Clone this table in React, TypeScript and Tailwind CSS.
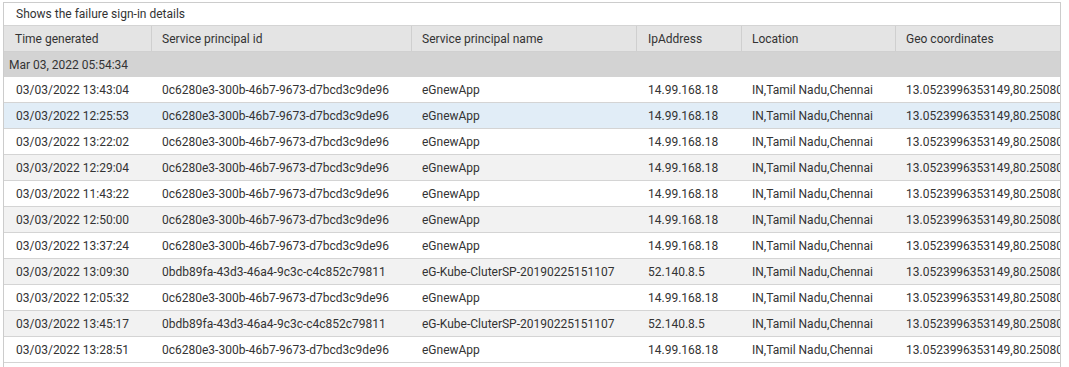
const rows = [
  { time: "03/03/2022 13:43:04", id: "0c6280e3-300b-46b7-9673-d7bcd3c9de96", name: "eGnewApp", ip: "14.99.168.18" },
  { time: "03/03/2022 12:25:53", id: "0c6280e3-300b-46b7-9673-d7bcd3c9de96", name: "eGnewApp", ip: "14.99.168.18" },
  { time: "03/03/2022 13:22:02", id: "0c6280e3-300b-46b7-9673-d7bcd3c9de96", name: "eGnewApp", ip: "14.99.168.18" },
  { time: "03/03/2022 12:29:04", id: "0c6280e3-300b-46b7-9673-d7bcd3c9de96", name: "eGnewApp", ip: "14.99.168.18" },
  { time: "03/03/2022 11:43:22", id: "0c6280e3-300b-46b7-9673-d7bcd3c9de96", name: "eGnewApp", ip: "14.99.168.18" },
  { time: "03/03/2022 12:50:00", id: "0c6280e3-300b-46b7-9673-d7bcd3c9de96", name: "eGnewApp", ip: "14.99.168.18" },
  { time: "03/03/2022 13:37:24", id: "0c6280e3-300b-46b7-9673-d7bcd3c9de96", name: "eGnewApp", ip: "14.99.168.18" },
  { time: "03/03/2022 13:09:30", id: "0bdb89fa-43d3-46a4-9c3c-c4c852c79811", name: "eG-Kube-CluterSP-20190225151107", ip: "52.140.8.5" },
  { time: "03/03/2022 12:05:32", id: "0c6280e3-300b-46b7-9673-d7bcd3c9de96", name: "eGnewApp", ip: "14.99.168.18" },
  { time: "03/03/2022 13:45:17", id: "0bdb89fa-43d3-46a4-9c3c-c4c852c79811", name: "eG-Kube-CluterSP-20190225151107", ip: "52.140.8.5" },
  { time: "03/03/2022 13:28:51", id: "0c6280e3-300b-46b7-9673-d7bcd3c9de96", name: "eGnewApp", ip: "14.99.168.18" },
]

const App = () => {
  return (
    <div className="w-[1069px] h-[367px] bg-white overflow-hidden pt-[2px] pl-[3px] font-['Roboto',sans-serif] text-[12px] text-[#333]">
      {/* grid box */}
      <div className="w-[1058px] h-[380px] border border-[#cccccc] overflow-hidden">
        {/* caption */}
        <div className="h-[23px] flex items-center pl-[12px] border-b border-[#d4d4d4] whitespace-nowrap">
          Shows the failure sign-in details
        </div>
        <div className="w-[1200px]">
          {/* header */}
          <div className="h-[26px] flex items-center bg-[#e4e4e4] border-b border-[#d0d0d0] whitespace-nowrap">
            <div className="w-[147px] h-full flex items-center pl-[11px]">Time generated</div>
            <div className="w-[260px] h-full flex items-center pl-[10px] border-l border-[#cfcfcf]">Service principal id</div>
            <div className="w-[225px] h-full flex items-center pl-[10px] border-l border-[#cfcfcf]">Service principal name</div>
            <div className="w-[105px] h-full flex items-center pl-[11px] border-l border-[#cfcfcf]">IpAddress</div>
            <div className="w-[154px] h-full flex items-center pl-[10px] border-l border-[#cfcfcf]">Location</div>
            <div className="w-[250px] h-full flex items-center pl-[10px] border-l border-[#cfcfcf]">Geo coordinates</div>
          </div>
          {/* group row */}
          <div className="h-[25px] flex items-center pl-[5px] bg-[#d3d3d3] whitespace-nowrap">Mar 03, 2022 05:54:34</div>
          {/* data rows */}
          {rows.map((r, i) => (
            <div
              key={i}
              className={
                "h-[26px] flex items-center border-b border-[#d4d4d4] whitespace-nowrap " +
                (i === 1 ? "bg-[#e1edf7]" : i % 2 === 1 ? "bg-[#f2f2f2]" : "bg-white")
              }
            >
              <div className="w-[148px] pl-[12px]">{r.time}</div>
              <div className="w-[260px] pl-[10px]">{r.id}</div>
              <div className="w-[225px] pl-[10px]">{r.name}</div>
              <div className="w-[105px] pl-[11px]">{r.ip}</div>
              <div className="w-[154px] pl-[10px]">IN,Tamil Nadu,Chennai</div>
              <div className="w-[250px] pl-[10px]">13.0523996353149,80.2508010864258</div>
            </div>
          ))}
        </div>
      </div>
    </div>
  )
}

export default App
